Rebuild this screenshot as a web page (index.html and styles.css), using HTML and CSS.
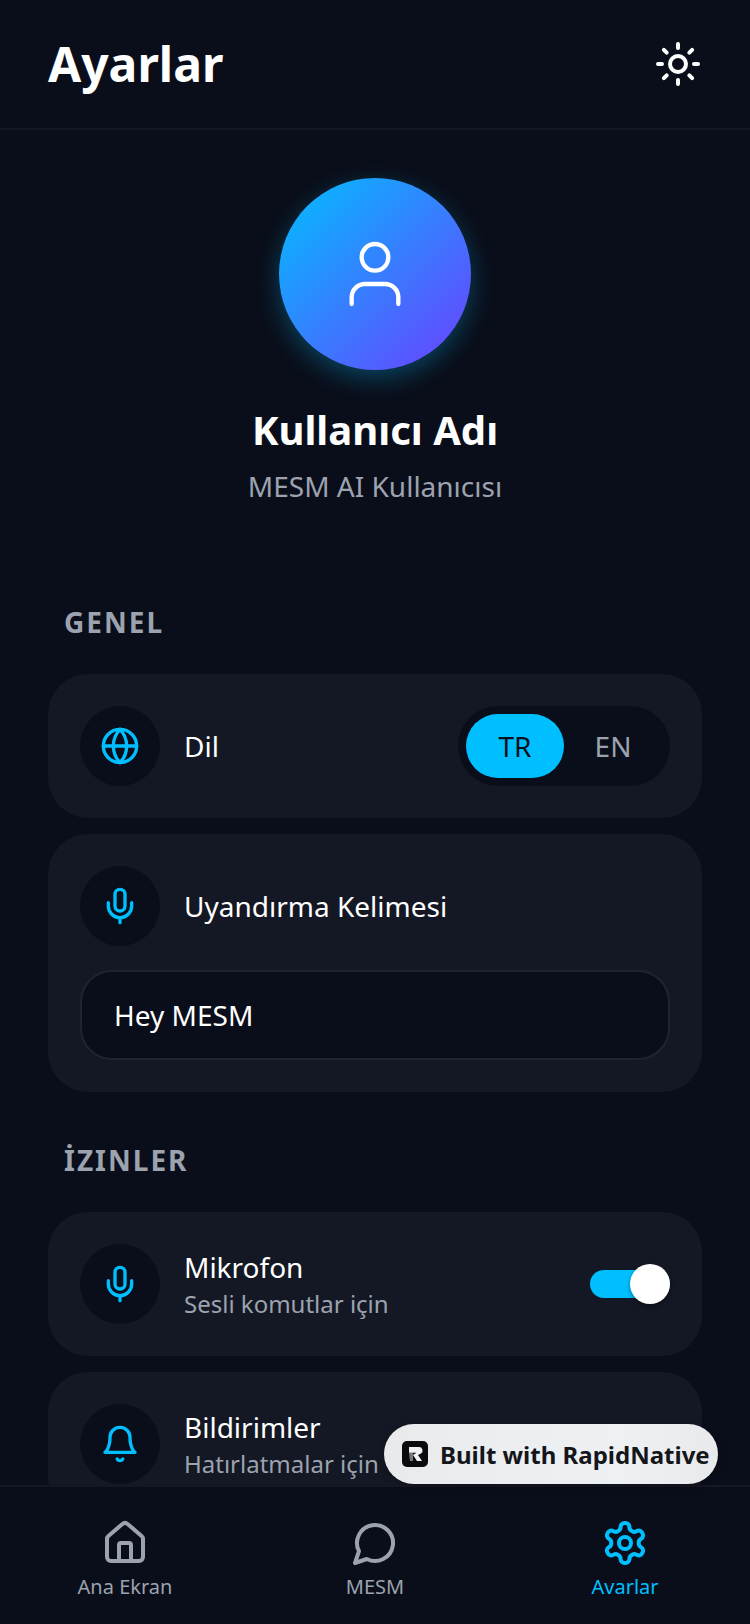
FILE: index.html
```html
<!DOCTYPE html>
<html lang="tr">
<head>
	<meta charset="UTF-8">
	<title>Ayarlar</title>
	<link rel="stylesheet" href="styles.css">
</head>

<body>
	<div class="screen">
		<header class="top">
			<h1>Ayarlar</h1>
			<svg class="ico ico48 white" viewBox="0 0 24 24"><circle cx="12" cy="12" r="4"/><path d="M12 2v2M12 20v2M4.93 4.93l1.41 1.41M17.66 17.66l1.41 1.41M2 12h2M20 12h2M6.34 17.66l-1.41 1.41M19.07 4.93l-1.41 1.41"/></svg>
		</header>

		<main class="scroll">
			<div class="profile">
				<div class="avatar">
					<svg class="ico ico80 white thin" viewBox="0 0 24 24"><path d="M19 21v-2a4 4 0 0 0-4-4H9a4 4 0 0 0-4 4v2"/><circle cx="12" cy="7" r="4"/></svg>
				</div>
				<h2>Kullanıcı Adı</h2>
				<p>MESM AI Kullanıcısı</p>
			</div>

			<h3 class="section">GENEL</h3>
			<div class="card">
				<div class="row">
					<div class="icon_box">
						<svg class="ico ico40 blue" viewBox="0 0 24 24"><circle cx="12" cy="12" r="10"/><path d="M12 2a14.5 14.5 0 0 0 0 20 14.5 14.5 0 0 0 0-20M2 12h20"/></svg>
					</div>
					<div class="label">Dil</div>
					<div class="segment">
						<span class="seg on">TR</span>
						<span class="seg">EN</span>
					</div>
				</div>
			</div>
			<div class="card">
				<div class="row">
					<div class="icon_box">
						<svg class="ico ico40 blue" viewBox="0 0 24 24"><path d="M12 2a3 3 0 0 0-3 3v7a3 3 0 0 0 6 0V5a3 3 0 0 0-3-3Z"/><path d="M19 10v2a7 7 0 0 1-14 0v-2M12 19v3"/></svg>
					</div>
					<div class="label">Uyandırma Kelimesi</div>
				</div>
				<div class="field">Hey MESM</div>
			</div>

			<h3 class="section">İZINLER</h3>
			<div class="card">
				<div class="row">
					<div class="icon_box">
						<svg class="ico ico40 blue" viewBox="0 0 24 24"><path d="M12 2a3 3 0 0 0-3 3v7a3 3 0 0 0 6 0V5a3 3 0 0 0-3-3Z"/><path d="M19 10v2a7 7 0 0 1-14 0v-2M12 19v3"/></svg>
					</div>
					<div class="label">
						<div>Mikrofon</div>
						<div class="hint">Sesli komutlar için</div>
					</div>
					<div class="switch"><span class="knob"></span></div>
				</div>
			</div>
			<div class="card">
				<div class="row">
					<div class="icon_box">
						<svg class="ico ico40 blue" viewBox="0 0 24 24"><path d="M6 8a6 6 0 0 1 12 0c0 7 3 9 3 9H3s3-2 3-9"/><path d="M10.3 21a1.94 1.94 0 0 0 3.4 0"/></svg>
					</div>
					<div class="label">
						<div>Bildirimler</div>
						<div class="hint">Hatırlatmalar için</div>
					</div>
					<div class="switch"><span class="knob"></span></div>
				</div>
			</div>
		</main>

		<nav class="tabs">
			<div class="tab">
				<svg class="ico ico48 grey" viewBox="0 0 24 24"><path d="M15 21v-8a1 1 0 0 0-1-1h-4a1 1 0 0 0-1 1v8"/><path d="M3 10a2 2 0 0 1 .709-1.528l7-5.999a2 2 0 0 1 2.582 0l7 5.999A2 2 0 0 1 21 10v9a2 2 0 0 1-2 2H5a2 2 0 0 1-2-2z"/></svg>
				<span>Ana Ekran</span>
			</div>
			<div class="tab">
				<svg class="ico ico48 grey" viewBox="0 0 24 24"><path d="M7.9 20A9 9 0 1 0 4 16.1L2 22Z"/></svg>
				<span>MESM</span>
			</div>
			<div class="tab active">
				<svg class="ico ico48 blue" viewBox="0 0 24 24"><path d="M12.22 2h-.44a2 2 0 0 0-2 2v.18a2 2 0 0 1-1 1.73l-.43.25a2 2 0 0 1-2 0l-.15-.08a2 2 0 0 0-2.73.73l-.22.38a2 2 0 0 0 .73 2.73l.15.1a2 2 0 0 1 1 1.72v.51a2 2 0 0 1-1 1.74l-.15.09a2 2 0 0 0-.73 2.73l.22.38a2 2 0 0 0 2.73.73l.15-.08a2 2 0 0 1 2 0l.43.25a2 2 0 0 1 1 1.73V20a2 2 0 0 0 2 2h.44a2 2 0 0 0 2-2v-.18a2 2 0 0 1 1-1.73l.43-.25a2 2 0 0 1 2 0l.15.08a2 2 0 0 0 2.73-.73l.22-.39a2 2 0 0 0-.73-2.73l-.15-.08a2 2 0 0 1-1-1.74v-.5a2 2 0 0 1 1-1.74l.15-.09a2 2 0 0 0 .73-2.73l-.22-.38a2 2 0 0 0-2.73-.73l-.15.08a2 2 0 0 1-2 0l-.43-.25a2 2 0 0 1-1-1.73V4a2 2 0 0 0-2-2z"/><circle cx="12" cy="12" r="3"/></svg>
				<span>Avarlar</span>
			</div>
		</nav>

		<div class="badge">
			<svg class="logo" viewBox="0 0 26 26"><rect width="26" height="26" rx="5" fill="#0b0b0d"/><path d="M7 6h10a3.5 3.5 0 0 1 2 6.4L16 14l4 6h-5l-4-6 3.500-2.200H7z" fill="#f2f2f2"/><path d="M7 12h4v8H8z" fill="#77797d"/></svg>
			<span>Built with RapidNative</span>
		</div>
	</div>
</body>
</html>
```

FILE: styles.css
```css
* {margin:0; padding:0; box-sizing:border-box;}
body {background:#0a0e1a; color:#fff; font-family:"Noto Sans","Open Sans",sans-serif; width:750px; height:1624px; overflow:hidden;}

.screen {width:750px; height:1624px; display:flex; flex-direction:column; position:relative; overflow:hidden;}

.ico {display:block; fill:none; stroke:currentColor; stroke-width:2; stroke-linecap:round; stroke-linejoin:round; flex:none;}
.ico40 {width:40px; height:40px;}
.ico48 {width:48px; height:48px;}
.ico80 {width:80px; height:80px;}
.thin {stroke-width:1.3;}
.white {color:#fff;}
.blue {color:#00bfff;}
.grey {color:#9ca3af;}

.top {height:130px; flex:none; display:flex; align-items:center; justify-content:space-between; padding:0 48px; border-bottom:2px solid #141824;}
.top h1 {font-size:48px; line-height:64px; font-weight:700;}

.scroll {flex:1; min-height:0; overflow:hidden; padding:0 48px;}

.profile {display:flex; flex-direction:column; align-items:center; padding:48px 0;}
.avatar {width:192px; height:192px; border-radius:50%; background:linear-gradient(135deg,#00bfff,#6c3fff); box-shadow:0 8px 24px rgba(0,191,255,.3); display:flex; align-items:center; justify-content:center;}
.profile h2 {font-size:40px; line-height:56px; font-weight:700; margin-top:32px;}
.profile p {font-size:28px; line-height:40px; color:#9ca3af; margin-top:8px;}

.section {font-size:28px; line-height:40px; font-weight:700; letter-spacing:2px; color:#9ca3af; padding:0 16px; margin:48px 0 32px;}

.card {background:#141824; border-radius:40px; padding:32px; margin-bottom:16px;}
.row {display:flex; align-items:center; gap:24px;}
.icon_box {width:80px; height:80px; border-radius:50%; background:#0a0e1a; display:flex; align-items:center; justify-content:center; flex:none;}
.label {flex:1; font-size:28px; line-height:40px; color:#fff;}
.hint {font-size:24px; line-height:34px; color:#9ca3af;}

.segment {display:flex; width:212px; height:80px; padding:8px; border-radius:40px; background:#0a0e1a;}
.seg {flex:1; border-radius:32px; display:flex; align-items:center; justify-content:center; font-size:28px; color:#9ca3af;}
.seg.on {background:#00bfff; color:#0a0e1a;}

.field {margin-top:24px; height:90px; border:2px solid #1f2433; border-radius:32px; background:#0a0e1a; padding:0 32px; font-size:28px; line-height:86px; color:#fff;}

.switch {width:80px; height:28px; border-radius:14px; background:#00bfff; display:flex; align-items:center; justify-content:flex-end; flex:none;}
.knob {width:40px; height:40px; border-radius:50%; background:#fff; box-shadow:0 2px 4px rgba(0,0,0,.4);}

.tabs {height:139px; flex:none; display:flex; background:#0a0e1a; border-top:2px solid #141824; padding-top:32px;}
.tab {flex:1; display:flex; flex-direction:column; align-items:center; font-size:20px; line-height:28px; color:#9ca3af; gap:6px;}
.tab.active {color:#00bfff;}

/* floats over the last card */
.badge {position:absolute; right:32px; bottom:140px; width:334px; height:60px; border-radius:30px; background:linear-gradient(90deg,#e9eaec,#eef1f4 70%,#e8e9eb); box-shadow:0 2px 6px rgba(0,0,0,.3); display:flex; align-items:center; gap:12px; padding-left:18px; font-size:24px; font-weight:700; color:#14161a;}
.logo {width:26px; height:26px; flex:none;}
```
